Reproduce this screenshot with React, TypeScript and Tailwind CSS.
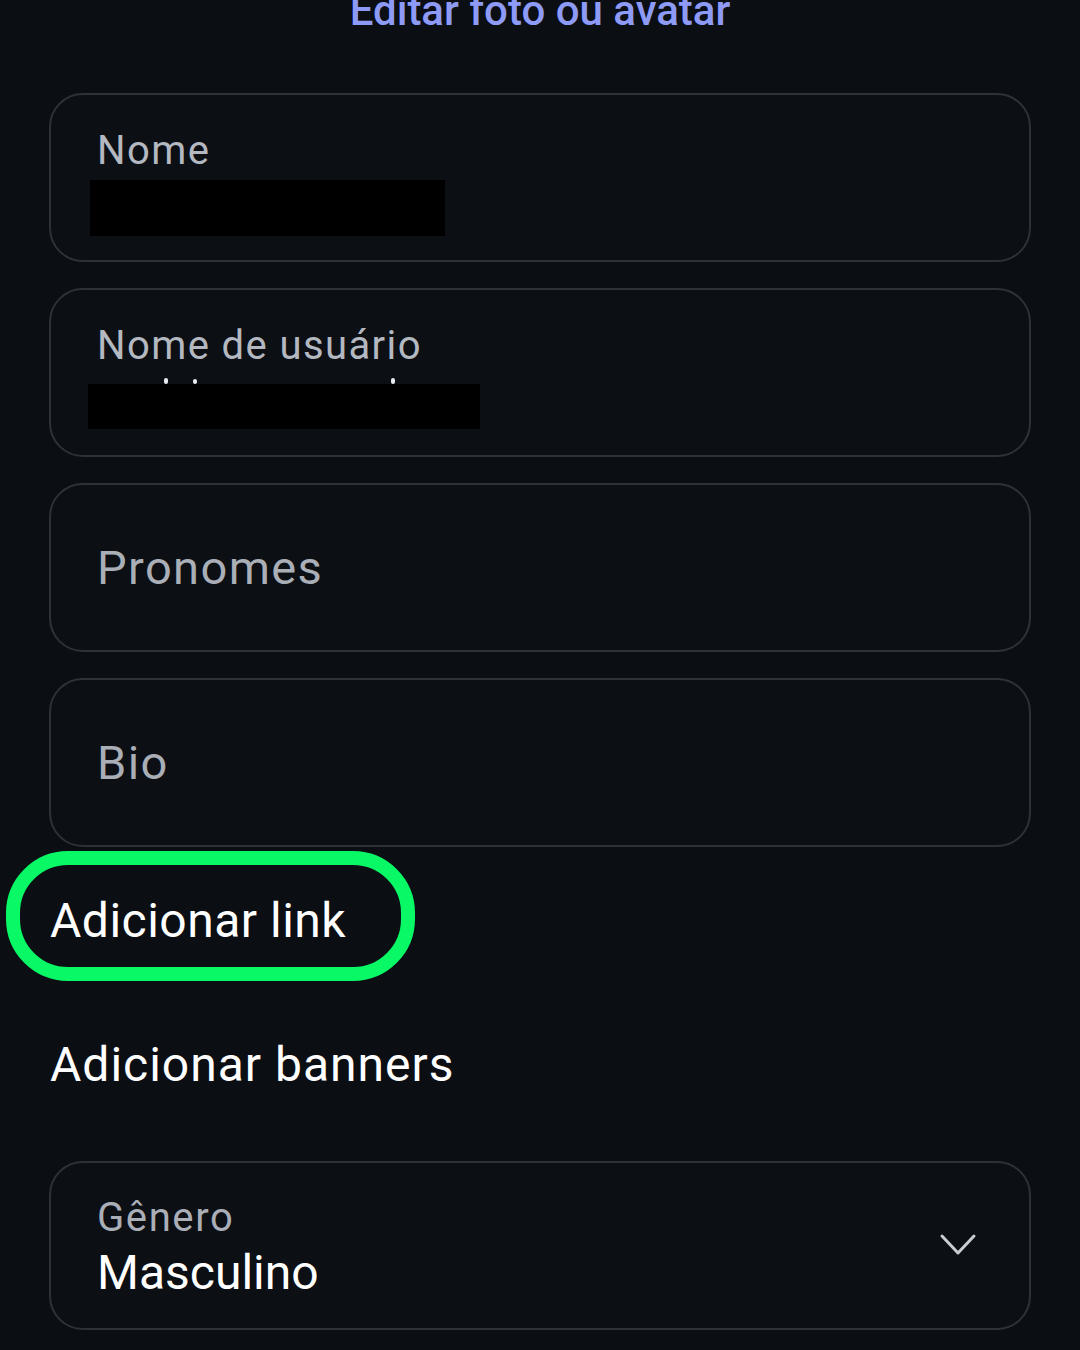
import { ReactNode } from 'react'

const font = { fontFamily: 'Roboto, "Noto Sans", sans-serif' }

function Field({ children, center = false }: { children: ReactNode; center?: boolean }) {
  return (
    <div
      className={`relative h-[169px] w-[982px] rounded-[34px] border-2 border-[#2e3238] bg-[#0c0f14] pl-[46px] ${
        center ? 'flex items-center' : 'pt-[32px]'
      }`}
    >
      {children}
    </div>
  )
}

function Label({ text }: { text: string }) {
  return <div className="text-[40px] leading-[48px] tracking-[1.4px] text-[#b3b8c1]">{text}</div>
}

export default function App() {
  return (
    <div className="min-h-[1350px] w-[1080px] overflow-hidden bg-[#0b0e13]" style={font}>
      <div className="mt-[-10px] text-center text-[42px] leading-[42px] font-medium text-[#8d9bf6]">
        Editar foto ou avatar
      </div>

      <div className="mt-[61px] flex flex-col gap-[26px] px-[49px]">
        <Field>
          <Label text="Nome" />
          <div className="ml-[-7px] mt-[5px] h-[56px] w-[355px] bg-black" />
        </Field>

        <Field>
          <Label text="Nome de usuário" />
          <div className="relative ml-[-9px] mt-[14px] h-[45px] w-[392px] bg-black">
            <span className="absolute left-[76px] top-[-6px] h-[6px] w-[4px] rounded-sm bg-[#e8eaee]" />
            <span className="absolute left-[105px] top-[-5px] h-[5px] w-[4px] rounded-sm bg-[#e8eaee]" />
            <span className="absolute left-[303px] top-[-6px] h-[6px] w-[4px] rounded-sm bg-[#e8eaee]" />
          </div>
        </Field>

        <Field center>
          <div className="text-[47px] leading-[56px] tracking-[1.4px] text-[#a9aeb7]">Pronomes</div>
        </Field>

        <Field center>
          <div className="text-[47px] leading-[56px] tracking-[1.4px] text-[#a9aeb7]">Bio</div>
        </Field>
      </div>

      <div className="px-[50px]">
        <div className="relative mt-[50px] text-[48px] leading-[48px] tracking-[0.5px] text-white">
          Adicionar link
          <div className="pointer-events-none absolute left-[-44px] top-[-46px] h-[130px] w-[409px] rounded-[62px] border-[14px] border-[#08f866]" />
        </div>
        <div className="mt-[96px] text-[48px] leading-[48px] tracking-[1px] text-white">Adicionar banners</div>
      </div>

      <div className="mt-[72px] px-[49px]">
        <div className="flex h-[169px] w-[982px] items-start justify-between rounded-[34px] border-2 border-[#2e3238] bg-[#0c0f14] pl-[46px] pr-[52px] pt-[31px]">
          <div>
            <div className="text-[40px] leading-[48px] tracking-[1.6px] text-[#a9aeb7]">Gênero</div>
            <div className="mt-[3px] text-[48px] leading-[56px] text-white">Masculino</div>
          </div>
          <svg className="mt-[38px]" width="38" height="26" viewBox="0 0 38 26" fill="none">
            <polyline
              points="3,4 19,21 35,4"
              stroke="#c9cdd3"
              strokeWidth="3"
              strokeLinecap="round"
              strokeLinejoin="round"
            />
          </svg>
        </div>
      </div>
    </div>
  )
}
